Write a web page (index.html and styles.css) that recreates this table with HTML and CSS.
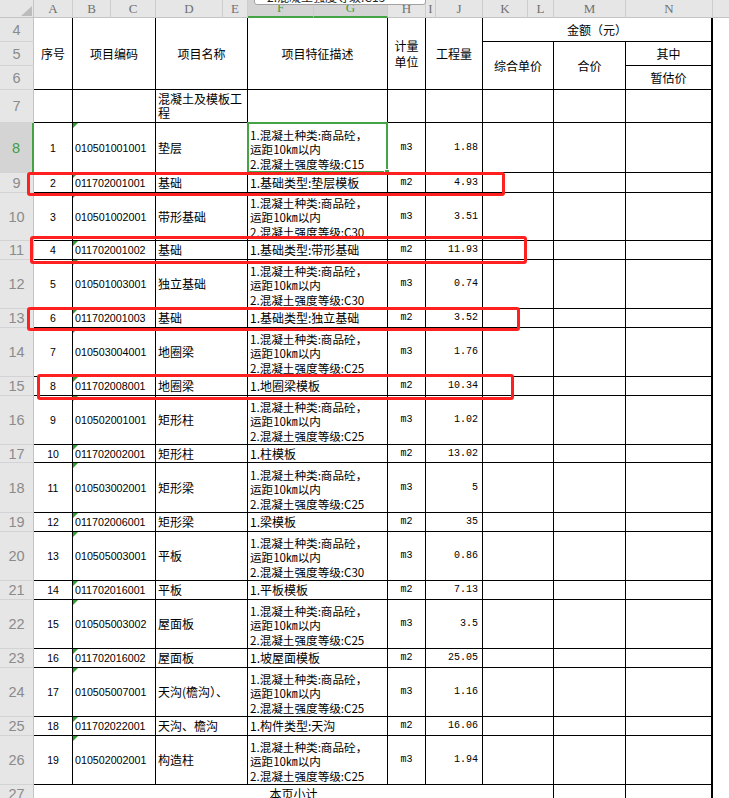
FILE: index.html
```html
<!DOCTYPE html>
<html lang="zh">
<head>
<meta charset="utf-8">
<title>清单</title>
<link rel="stylesheet" href="styles.css">
</head>
<body>
<div class="sheet">
  <div class="tip">2.混凝土强度等级:C15</div>
  <div class="grid">
    <div class="ch corner"></div>
    <div class="ch">A</div><div class="ch">B</div><div class="ch">C</div><div class="ch">D</div><div class="ch">E</div>
    <div class="ch hs">F</div><div class="ch hs">G</div>
    <div class="ch">H</div><div class="ch">I</div><div class="ch">J</div><div class="ch">K</div><div class="ch">L</div><div class="ch">M</div><div class="ch">N</div>
    <div class="ch last"></div>

    <div class="rh">4</div>
    <div class="c hd ctr r3">序号</div>
    <div class="c hd ctr s2 r3">项目编码</div>
    <div class="c hd ctr s2 r3">项目名称</div>
    <div class="c hd ctr s2 r3">项目特征描述</div>
    <div class="c hd ctr r3 two">计量<br>单位</div>
    <div class="c hd ctr s2 r3">工程量</div>
    <div class="c hd ctr s4 nn">金额（元）</div>
    <div class="o"></div>

    <div class="rh">5</div>
    <div class="c hd ctr s2 r2">综合单价</div>
    <div class="c hd ctr r2">合价</div>
    <div class="c hd ctr nn">其中</div>
    <div class="o"></div>

    <div class="rh">6</div>
    <div class="c hd ctr nn">暂估价</div>
    <div class="o"></div>

    <div class="rh">7</div>
    <div class="c"></div><div class="c s2"></div>
    <div class="c name s2 wrap">混凝土及模板工程</div>
    <div class="c s2"></div><div class="c"></div><div class="c s2"></div><div class="c s2"></div><div class="c"></div><div class="c nn"></div>
    <div class="o"></div>

    <div class="rh sel">8</div>
    <div class="c a">1</div><div class="c code s2">010501001001</div><div class="c name s2">垫层</div>
    <div class="c desc m s2"><span>1.混凝土种类:商品砼，<br>运距10㎞以内<br>2.混凝土强度等级:C15</span></div>
    <div class="c unit">m3</div><div class="c qty s2">1.88</div><div class="c s2"></div><div class="c"></div><div class="c nn"></div><div class="o"></div>

    <div class="rh">9</div>
    <div class="c a">2</div><div class="c code s2">011702001001</div><div class="c name s2">基础</div>
    <div class="c desc s2">1.基础类型:垫层模板</div>
    <div class="c unit">m2</div><div class="c qty s2">4.93</div><div class="c s2"></div><div class="c"></div><div class="c nn"></div><div class="o"></div>

    <div class="rh">10</div>
    <div class="c a">3</div><div class="c code s2">010501002001</div><div class="c name s2">带形基础</div>
    <div class="c desc m s2"><span>1.混凝土种类:商品砼，<br>运距10㎞以内<br>2.混凝土强度等级:C30</span></div>
    <div class="c unit">m3</div><div class="c qty s2">3.51</div><div class="c s2"></div><div class="c"></div><div class="c nn"></div><div class="o"></div>

    <div class="rh">11</div>
    <div class="c a">4</div><div class="c code s2">011702001002</div><div class="c name s2">基础</div>
    <div class="c desc s2">1.基础类型:带形基础</div>
    <div class="c unit">m2</div><div class="c qty s2">11.93</div><div class="c s2"></div><div class="c"></div><div class="c nn"></div><div class="o"></div>

    <div class="rh">12</div>
    <div class="c a">5</div><div class="c code s2">010501003001</div><div class="c name s2">独立基础</div>
    <div class="c desc m s2"><span>1.混凝土种类:商品砼，<br>运距10㎞以内<br>2.混凝土强度等级:C30</span></div>
    <div class="c unit">m3</div><div class="c qty s2">0.74</div><div class="c s2"></div><div class="c"></div><div class="c nn"></div><div class="o"></div>

    <div class="rh">13</div>
    <div class="c a">6</div><div class="c code s2">011702001003</div><div class="c name s2">基础</div>
    <div class="c desc s2">1.基础类型:独立基础</div>
    <div class="c unit">m2</div><div class="c qty s2">3.52</div><div class="c s2"></div><div class="c"></div><div class="c nn"></div><div class="o"></div>

    <div class="rh">14</div>
    <div class="c a">7</div><div class="c code s2">010503004001</div><div class="c name s2">地圈梁</div>
    <div class="c desc m s2"><span>1.混凝土种类:商品砼，<br>运距10㎞以内<br>2.混凝土强度等级:C25</span></div>
    <div class="c unit">m3</div><div class="c qty s2">1.76</div><div class="c s2"></div><div class="c"></div><div class="c nn"></div><div class="o"></div>

    <div class="rh">15</div>
    <div class="c a">8</div><div class="c code s2">011702008001</div><div class="c name s2">地圈梁</div>
    <div class="c desc s2">1.地圈梁模板</div>
    <div class="c unit">m2</div><div class="c qty s2">10.34</div><div class="c s2"></div><div class="c"></div><div class="c nn"></div><div class="o"></div>

    <div class="rh">16</div>
    <div class="c a">9</div><div class="c code s2">010502001001</div><div class="c name s2">矩形柱</div>
    <div class="c desc m s2"><span>1.混凝土种类:商品砼，<br>运距10㎞以内<br>2.混凝土强度等级:C25</span></div>
    <div class="c unit">m3</div><div class="c qty s2">1.02</div><div class="c s2"></div><div class="c"></div><div class="c nn"></div><div class="o"></div>

    <div class="rh">17</div>
    <div class="c a">10</div><div class="c code s2">011702002001</div><div class="c name s2">矩形柱</div>
    <div class="c desc s2">1.柱模板</div>
    <div class="c unit">m2</div><div class="c qty s2">13.02</div><div class="c s2"></div><div class="c"></div><div class="c nn"></div><div class="o"></div>

    <div class="rh">18</div>
    <div class="c a">11</div><div class="c code s2">010503002001</div><div class="c name s2">矩形梁</div>
    <div class="c desc m s2"><span>1.混凝土种类:商品砼，<br>运距10㎞以内<br>2.混凝土强度等级:C25</span></div>
    <div class="c unit">m3</div><div class="c qty s2">5</div><div class="c s2"></div><div class="c"></div><div class="c nn"></div><div class="o"></div>

    <div class="rh">19</div>
    <div class="c a">12</div><div class="c code s2">011702006001</div><div class="c name s2">矩形梁</div>
    <div class="c desc s2">1.梁模板</div>
    <div class="c unit">m2</div><div class="c qty s2">35</div><div class="c s2"></div><div class="c"></div><div class="c nn"></div><div class="o"></div>

    <div class="rh">20</div>
    <div class="c a">13</div><div class="c code s2">010505003001</div><div class="c name s2">平板</div>
    <div class="c desc m s2"><span>1.混凝土种类:商品砼，<br>运距10㎞以内<br>2.混凝土强度等级:C30</span></div>
    <div class="c unit">m3</div><div class="c qty s2">0.86</div><div class="c s2"></div><div class="c"></div><div class="c nn"></div><div class="o"></div>

    <div class="rh">21</div>
    <div class="c a">14</div><div class="c code s2">011702016001</div><div class="c name s2">平板</div>
    <div class="c desc s2">1.平板模板</div>
    <div class="c unit">m2</div><div class="c qty s2">7.13</div><div class="c s2"></div><div class="c"></div><div class="c nn"></div><div class="o"></div>

    <div class="rh">22</div>
    <div class="c a">15</div><div class="c code s2">010505003002</div><div class="c name s2">屋面板</div>
    <div class="c desc m s2"><span>1.混凝土种类:商品砼，<br>运距10㎞以内<br>2.混凝土强度等级:C25</span></div>
    <div class="c unit">m3</div><div class="c qty s2">3.5</div><div class="c s2"></div><div class="c"></div><div class="c nn"></div><div class="o"></div>

    <div class="rh">23</div>
    <div class="c a">16</div><div class="c code s2">011702016002</div><div class="c name s2">屋面板</div>
    <div class="c desc s2">1.坡屋面模板</div>
    <div class="c unit">m2</div><div class="c qty s2">25.05</div><div class="c s2"></div><div class="c"></div><div class="c nn"></div><div class="o"></div>

    <div class="rh">24</div>
    <div class="c a">17</div><div class="c code s2">010505007001</div><div class="c name s2">天沟(檐沟）、</div>
    <div class="c desc m s2"><span>1.混凝土种类:商品砼，<br>运距10㎞以内<br>2.混凝土强度等级:C25</span></div>
    <div class="c unit">m3</div><div class="c qty s2">1.16</div><div class="c s2"></div><div class="c"></div><div class="c nn"></div><div class="o"></div>

    <div class="rh">25</div>
    <div class="c a">18</div><div class="c code s2">011702022001</div><div class="c name s2">天沟、檐沟</div>
    <div class="c desc s2">1.构件类型:天沟</div>
    <div class="c unit">m2</div><div class="c qty s2">16.06</div><div class="c s2"></div><div class="c"></div><div class="c nn"></div><div class="o"></div>

    <div class="rh">26</div>
    <div class="c a">19</div><div class="c code s2">010502002001</div><div class="c name s2">构造柱</div>
    <div class="c desc m s2"><span>1.混凝土种类:商品砼，<br>运距10㎞以内<br>2.混凝土强度等级:C25</span></div>
    <div class="c unit">m3</div><div class="c qty s2">1.94</div><div class="c s2"></div><div class="c"></div><div class="c nn"></div><div class="o"></div>

    <div class="rh">27</div>
    <div class="c hd ctr s12">本页小计</div>
    <div class="c"></div><div class="c nn"></div><div class="o"></div>
  </div>

  <div class="selbox"></div>
  <div class="handle"></div>
  <div class="hl hl1"></div>
  <div class="hl hl2"></div>
  <div class="hl hl3"></div>
  <div class="hl hl4"></div>
</div>
</body>
</html>
```

FILE: styles.css
```css
* { box-sizing: border-box; margin: 0; padding: 0; }
html, body { width: 729px; height: 798px; overflow: hidden; background: #fff; }
body { font-family: "Noto Sans CJK SC", sans-serif; color: #000; }

.sheet { position: relative; width: 729px; height: 798px; overflow: hidden; }

.grid {
  display: grid;
  grid-template-columns: 34px 39px 38px 45px 67px 25px 66px 74px 38px 10px 47px 45px 26px 72px 87px 16px;
  grid-template-rows: 18px 24px 24px 24px 33px 50px 20px 48px 19px 49px 19px 49px 19px 49px 18px 50px 19px 49px 19px 49px 19px 49px 19px 49px 19px;
}

/* column header */
.ch {
  background: #e6e6e6;
  border-right: 1px solid #cdcdcd;
  border-bottom: 1px solid #c4c4c4;
  display: flex; align-items: center; justify-content: center;
  font-family: "Liberation Serif", serif; font-size: 13px; color: #707070;
  overflow: hidden; position: relative;
}
.ch.hs { background: #d4d4d4; color: #3f9f3f; border-bottom: 2px solid #44a344; }
.ch.last { border-right: none; }
.corner { border-right-color: #c4c4c4; }
.corner::after {
  content: ""; position: absolute; right: 1px; bottom: 1px; width: 0; height: 0;
  border-left: 11px solid transparent; border-bottom: 10px solid #bcbcbc;
}

/* row header */
.rh {
  background: #e6e6e6;
  border-right: 1px solid #c4c4c4;
  border-bottom: 1px solid #d3d3d3;
  display: flex; align-items: center; justify-content: center;
  font-family: "Liberation Sans", sans-serif; font-size: 14.5px; color: #8b8b8b;
}
.rh.sel { background: #d4d4d4; color: #3f9f3f; border-right: 2px solid #44a344; }

/* cells */
.c {
  border-right: 1px solid #000;
  border-bottom: 1px solid #000;
  background: #fff;
  display: flex; align-items: center;
  overflow: hidden; white-space: nowrap;
  padding: 0 2px;
  font-size: 12px; line-height: 14px;
  position: relative;
}
.o { background: #fff; }
.ctr { justify-content: center; text-align: center; }
.two { line-height: 16px; }
.s2 { grid-column: span 2; }
.s4 { grid-column: span 4; }
.s12 { grid-column: span 12; }
.r2 { grid-row: span 2; }
.r3 { grid-row: span 3; }
.nn { border-right-width: 2px; }

.a { justify-content: center; font-family: "Liberation Sans", sans-serif; font-size: 10.5px; }
.code { font-family: "Liberation Sans", sans-serif; font-size: 10.7px; padding-left: 2px; }
.code::before {
  content: ""; position: absolute; left: 0; top: 0; width: 0; height: 0;
  border-top: 5px solid #2f9e2f; border-right: 5px solid transparent;
}
.name { padding-left: 2px; }
.wrap { white-space: normal; word-break: break-all; }
.desc { padding-left: 2px; }
.desc.m { align-items: flex-end; font-size: 11.6px; line-height: 14.5px; padding-bottom: 1px; }
.unit { justify-content: center; font-family: "Liberation Mono", monospace; font-size: 10px; }
.qty { justify-content: flex-end; font-family: "Liberation Mono", monospace; font-size: 10px; padding-right: 4px; }

/* overlays */
.tip {
  position: absolute; left: 254px; top: -11px; width: 172px; height: 16px;
  background: #fff; border: 1px solid #a3a3a3; border-radius: 3px;
  font-size: 12px; line-height: 14px; padding-left: 12px;
  white-space: nowrap; overflow: hidden; z-index: 5; color: #222;
}
.selbox {
  position: absolute; left: 247px; top: 122px; width: 141px; height: 51px;
  border: 2px solid #44a344; z-index: 3;
}
.handle {
  position: absolute; left: 384px; top: 169px; width: 6px; height: 6px;
  background: #44a344; border: 1px solid #fff; z-index: 3;
}
.hl { position: absolute; border: 3px solid #ff2020; border-radius: 3px; z-index: 4; }
.hl1 { left: 27px; top: 172px; width: 478px; height: 24px; }
.hl2 { left: 30px; top: 236px; width: 497px; height: 28px; }
.hl3 { left: 27px; top: 307px; width: 493px; height: 24px; }
.hl4 { left: 37px; top: 374px; width: 477px; height: 26px; }
```
